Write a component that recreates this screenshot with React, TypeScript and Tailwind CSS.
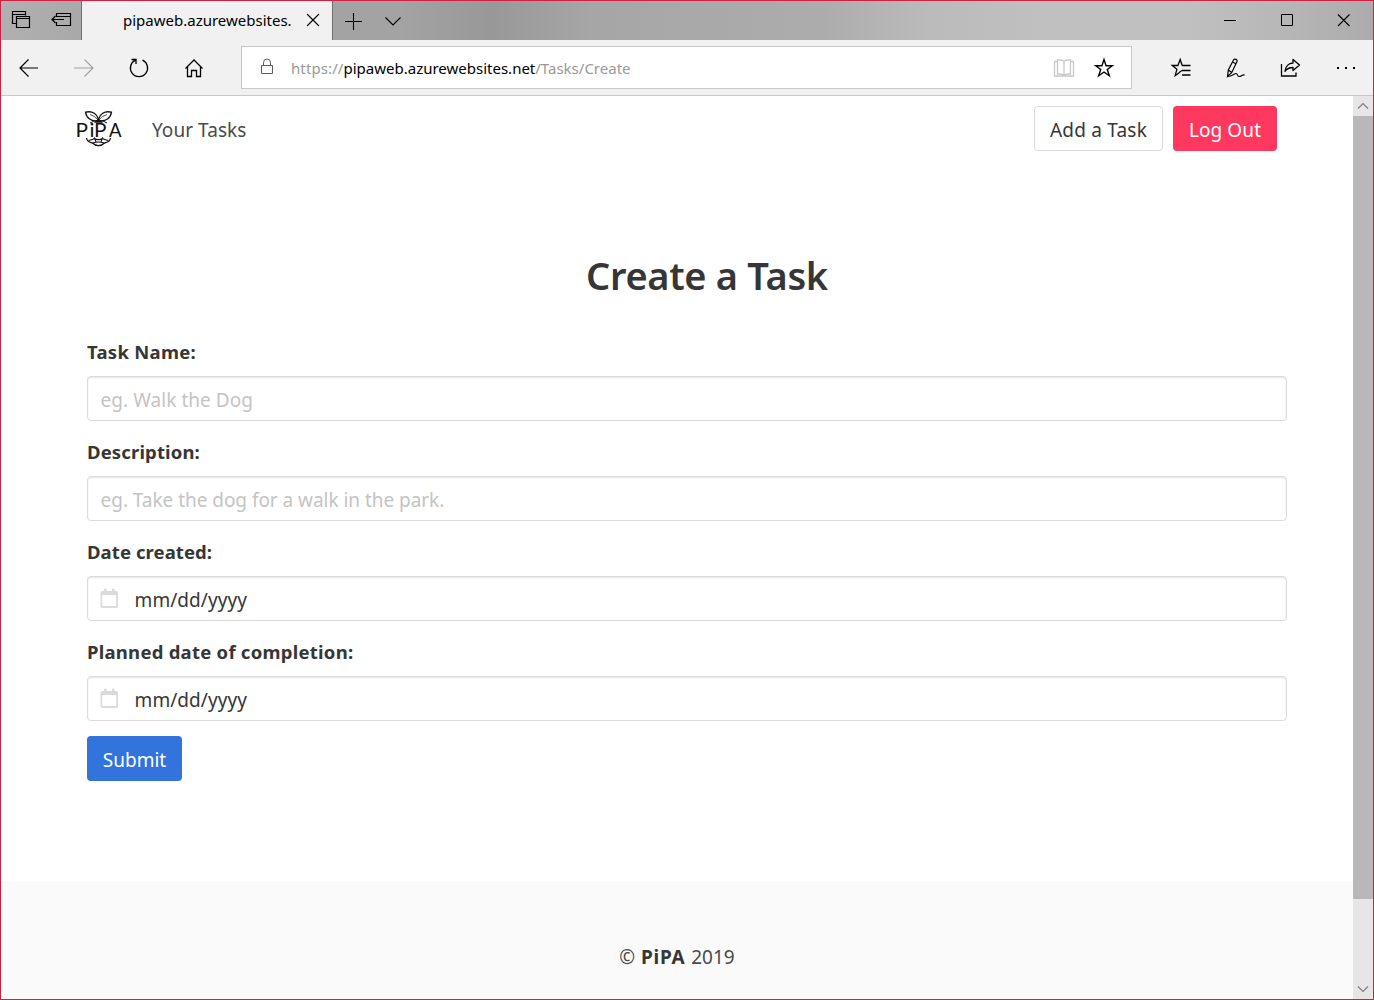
import type { ReactNode } from "react";

function Icon({ size = 22, className = "", children }: { size?: number; className?: string; children: ReactNode }) {
  return (
    <svg
      width={size}
      height={size}
      viewBox={`0 0 ${size} ${size}`}
      fill="none"
      stroke="currentColor"
      strokeWidth="1.1"
      className={`block shrink-0 ${className}`}
    >
      {children}
    </svg>
  );
}

function TitleBar() {
  return (
    <div className="flex h-[39px] shrink-0 bg-[linear-gradient(90deg,#b0b0b0_0px,#a9a9a9_80px,#a3a3a3_330px,#a3a3a3_400px,#989898_490px,#a6a6a6_590px,#a9a9a9_700px,#acacac_820px,#bbbbbb_930px,#c0c0c0_1050px,#c0c0c0_1180px,#b9b9b9_1260px,#acacac_1372px)] text-black">
      <div className="flex w-20 items-center pb-px pl-[9px]">
        <Icon>
          <path d="M6 14.500H2.500v-12h13v4M2.500 5.500h13" strokeWidth="1.200" />
          <path d="M6.500 7.500h13v11h-13zM6.500 9.500h13" strokeWidth="1.200" />
        </Icon>
        <Icon className="ml-[18px]">
          <path d="M6.500 8V4.500h14v12h-14V13M6.500 7.500h14" strokeWidth="1.200" />
          <path d="M14 10.500H2M5.500 7L2 10.500 5.500 14" strokeWidth="1.200" />
        </Icon>
      </div>
      <div className="flex w-[252px] items-center border-x border-[#6f6f6f] bg-[#f1f1f1] pb-px pl-[41px]">
        <span className="w-[182px] whitespace-nowrap text-[15px] leading-5">pipaweb.azurewebsites.</span>
        <Icon size={16}>
          <path d="M2 2l12 12M14 2L2 14" />
        </Icon>
      </div>
      <div className="flex flex-1 items-center pl-[11px]">
        <Icon size={18}>
          <path d="M1 9.500h17M9.500 1v17" />
        </Icon>
        <Icon size={18} className="ml-[22px]">
          <path d="M1.500 5.500L9 13l7.500-7.500" />
        </Icon>
      </div>
      <div className="flex items-center gap-[41px] pb-[2px] pr-[21px]">
        <Icon size={16}>
          <path d="M2 8.500h12" strokeWidth="1" />
        </Icon>
        <Icon size={16}>
          <path d="M2.500 2.500h11v11h-11z" strokeWidth="1" />
        </Icon>
        <Icon size={16}>
          <path d="M2 2.500l11.500 11.500M13.500 2.500L2 14" />
        </Icon>
      </div>
    </div>
  );
}

const STAR = "M11 2.500l2.100 6.200h6.200l-5 3.800 2 6.200L11 15l-5.300 3.700 2-6.200-5-3.800h6.200z";

function Toolbar() {
  return (
    <div className="flex h-14 shrink-0 items-center border-b border-[#c8c8c8] bg-[#f1f1f1] text-black">
      <div className="flex w-[240px] items-center gap-[33px] pl-[17px]">
        <Icon>
          <path d="M20 11H2M10.500 2.500L2 11l8.500 8.500" strokeWidth="1.200" />
        </Icon>
        <Icon className="text-[#a0a0a0]">
          <path d="M1 11h19M11.500 2.500L20 11l-8.500 8.500" />
        </Icon>
        <Icon>
          <path d="M14.500 3.200A8.600 8.600 0 1 1 7.500 3.200" strokeWidth="1.300" />
          <path d="M3.500 2.500H8V7" strokeWidth="1.300" />
        </Icon>
        <Icon>
          <path d="M2.500 11.500L11 3l8.500 8.500M4.500 10v9.500h4v-6h5v6h4V10" strokeWidth="1.300" />
        </Icon>
      </div>
      <div className="flex h-[43px] w-[891px] items-center border border-[#c8c8c8] bg-white">
        <Icon size={20} className="mb-px ml-[15px] text-[#5c5c5c]">
          <path d="M4.500 8.500h11v8h-11zM6.500 8.500V5.500a3.500 3.500 0 0 1 7 0v3" strokeWidth="1" />
        </Icon>
        <div className="ml-[14px] flex-1 whitespace-nowrap text-[15px] leading-5 text-[#999]">
          <span className="tracking-[0.1px]">https://</span>
          <span className="text-black">pipaweb.azurewebsites.net</span>
          <span>/Tasks/Create</span>
        </div>
        <Icon className="text-[#c9c9c9]">
          <path
            d="M11 4.500c-1-1-2-1.500-3.500-1.500H4.500v14h3c1.500 0 2.500.5 3.500 1.500 1-1 2-1.500 3.500-1.500h3V3h-3C13 3 12 3.500 11 4.500zM11 4.500v14M4.500 4.500h-3v14.500h19V4.500h-3"
            strokeWidth="1.300"
          />
        </Icon>
        <Icon className="ml-[18px] mr-[16px]">
          <path d={STAR} strokeWidth="1.400" />
        </Icon>
      </div>
      <div className="flex flex-1 items-center gap-[33px] pl-[38px]">
        <Icon>
          <path d="M9.500 15.500l-4.300 3.200 1.700-6.400-4.700-3.800h5.700l2.300-6 2 6" strokeWidth="1.300" />
          <path d="M12 8.500h8.500M12 13.500h8.500M12 18h8.500M9 15.500l3-2" strokeWidth="1.300" />
        </Icon>
        <Icon>
          <path d="M2.500 19.500l.8-6.500L8.500 3c1-1.500 4.500-.5 3.500 1.500L6.800 15.500zM3.300 13l3.500 2.500M7.500 5l4 2" strokeWidth="1.200" />
          <path d="M2.500 19.500c5 0 6.500-3 8.500-3s.8 3 3.200 3 2.500-2 5.500-1.500" strokeWidth="1.200" />
        </Icon>
        <Icon>
          <path d="M1.500 7v12h14.500v-3.500" strokeWidth="1.300" />
          <path d="M13 2.500L19.500 8 13 13.500V10.500c-3.500 0-6 1-8 4 .5-5 3.500-8.500 8-8.500z" strokeWidth="1.300" strokeLinejoin="round" />
        </Icon>
        <Icon>
          <path d="M2 11h2M10 11h2M18 11h2" strokeWidth="2" />
        </Icon>
      </div>
    </div>
  );
}

function Logo() {
  return (
    <svg width="48" height="38" viewBox="0 0 48 38" fill="none" stroke="#111" strokeWidth="1.300" className="block shrink-0" aria-label="PiPA">
      <path d="M22.500 10.500C21.500 4 16.500.5 9.500 2.200 10.500 8 15 12 22.500 10.500zM22.500 10.500C23.500 4 28.500.5 35.500 2.200 34.500 8 30 12 22.500 10.500z" />
      <path d="M14 4.500q5.500 1.500 8.500 6 3-4.500 8.500-6" strokeWidth=".7" />
      <path d="M14 13q3.500-2.500 8.500-2.500t8.500 2.500" strokeWidth="1" />
      <path d="M18.500 12.500l4-3.500 4 3.500z" fill="#111" strokeWidth=".5" />
      <path d="M10.500 28c.5 3.500 3 4.500 6 5 3.500 3.500 8.500 3.500 12 0 3-.5 5.500-1.500 6-5" />
      <path d="M12.500 30.500c3-.5 5-1 6-2.500l1.500 4M32.500 30.500c-3-.5-5-1-6-2.500l-1.500 4M18.500 28.500c2 1.500 6 1.500 8 0M17 33q5.500-2 11 0" strokeWidth="1.100" />
      <g fill="#111" stroke="none" fontFamily="Lato" fontSize="18.500">
        <text x="-0.500 12" y="27" transform="scale(1.120 1)">
          Pi
        </text>
        <text x="16" y="27" transform="scale(1.120 1)">
          P
        </text>
        <text x="33" y="27">
          A
        </text>
      </g>
    </svg>
  );
}

function Navbar() {
  return (
    <nav className="flex h-[65px] items-center pl-[75px] pr-[76px] text-[19px]">
      <Logo />
      <span className="ml-[28px] mt-[3px] leading-6 tracking-[0.05px] text-[#4a4a4a]">Your Tasks</span>
      <div className="ml-auto flex gap-2.5">
        <button className="h-[45px] w-[129px] rounded border border-[#dbdbdb] bg-white pt-[3px] tracking-[0.2px] text-[#363636]">
          Add a Task
        </button>
        <button className="h-[45px] w-[104px] rounded bg-[#ff3860] pt-[3px] tracking-[0.1px] text-white">Log Out</button>
      </div>
    </nav>
  );
}

function CalendarIcon() {
  return (
    <svg width="19" height="21" viewBox="0 0 19 21" className="mr-[15px] block shrink-0 text-[#dbdbdb]">
      <path
        fill="currentColor"
        fillRule="evenodd"
        d="M4 1.500a1 1 0 0 1 1-1h.5a1 1 0 0 1 1 1V3h5.500V1.500a1 1 0 0 1 1-1h.5a1 1 0 0 1 1 1V3h1.500a2 2 0 0 1 2 2v13a2 2 0 0 1-2 2H2.500a2 2 0 0 1-2-2V5a2 2 0 0 1 2-2H4zM2.200 7v11h14V7z"
      />
    </svg>
  );
}

interface FieldProps {
  label: string;
  placeholder: string;
  labelClass: string;
  textClass: string;
  date?: boolean;
}

function Field({ label, placeholder, labelClass, textClass, date = false }: FieldProps) {
  return (
    <div className="mb-[15px]">
      <label className={`block h-10 pt-1 text-[18.5px] font-bold leading-6 text-[#363636] ${labelClass}`}>{label}</label>
      <div className="flex h-[45px] items-center rounded border border-[#dbdbdb] bg-white pl-3 shadow-[inset_0_1px_2px_rgba(10,10,10,0.1)]">
        {date && <CalendarIcon />}
        <span className={`pl-[0.6px] pt-[3px] text-[19px] leading-6 ${textClass}`}>{placeholder}</span>
      </div>
    </div>
  );
}

function ScrollBar() {
  return (
    <div className="flex w-5 shrink-0 flex-col bg-[#e6e6e6] text-[#7c7c7c]">
      <div className="flex h-5 items-center justify-center">
        <Icon size={12}>
          <path d="M1 8.500l5-5 5 5" />
        </Icon>
      </div>
      <div className="h-[783px] bg-[#b8b8b8]" />
      <div className="mt-auto flex h-5 items-center justify-center">
        <Icon size={12}>
          <path d="M1 3.500l5 5 5-5" />
        </Icon>
      </div>
    </div>
  );
}

export default function App() {
  return (
    <div className="flex h-[1000px] w-[1374px] flex-col overflow-hidden border border-[#d41f42] bg-white font-['Noto_Sans',sans-serif]">
      <TitleBar />
      <Toolbar />
      <div className="flex min-h-0 flex-1">
        <div className="flex flex-1 flex-col">
          <Navbar />
          <main className="flex-1 pl-[86px] pr-[66px] pt-[87px]">
            <h1 className="h-[88px] pl-10 text-center text-[38px] font-semibold leading-[54px] tracking-[-0.32px] text-[#363636]">
              Create a Task
            </h1>
            <Field label="Task Name:" labelClass="tracking-[0.28px]" placeholder="eg. Walk the Dog" textClass="tracking-[0.05px] text-[#c4c4c4]" />
            <Field
              label="Description:"
              labelClass="tracking-[0.14px]"
              placeholder="eg. Take the dog for a walk in the park."
              textClass="tracking-[-0.04px] text-[#c4c4c4]"
            />
            <Field label="Date created:" labelClass="tracking-[0.08px]" placeholder="mm/dd/yyyy" textClass="tracking-[0.05px] text-[#363636]" date />
            <Field
              label="Planned date of completion:"
              labelClass="tracking-[0.25px]"
              placeholder="mm/dd/yyyy"
              textClass="tracking-[0.05px] text-[#363636]"
              date
            />
            <button className="h-[45px] w-[95px] rounded bg-[#3273dc] pt-[3px] text-[19px] text-white">Submit</button>
          </main>
          <footer className="flex h-[118px] shrink-0 justify-center bg-[#fafafa] pt-16 text-[19px] leading-6 text-[#4a4a4a]">
            <p className="[word-spacing:1px]">
              © <strong className="font-bold tracking-[0.7px] text-[#363636]">PiPA</strong> 2019
            </p>
          </footer>
        </div>
        <ScrollBar />
      </div>
    </div>
  );
}
